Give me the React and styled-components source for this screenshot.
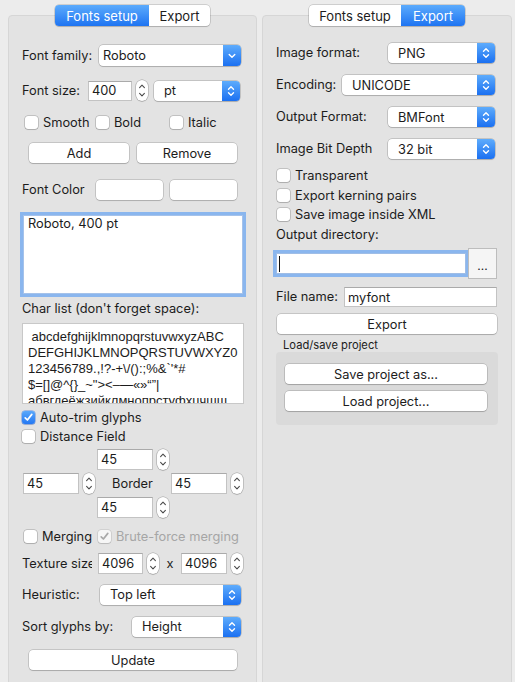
import React from "react";
import styled, { createGlobalStyle } from "styled-components";

const GlobalStyle = createGlobalStyle`
  html, body {
    margin: 0;
    padding: 0;
  }
  body {
    background: #ececec;
    font-family: Inter, "Liberation Sans", Arial, sans-serif;
    font-size: 12.8px;
    color: #1c1c1c;
  }
`;

const Window = styled.div`
  display: flex;
  align-items: flex-start;
  gap: 5px;
  height: 682px;
  padding: 5px 3px 0 8px;
  box-sizing: border-box;
  overflow: hidden;
  background: #ececec;
`;

const Column = styled.div`
  display: flex;
  flex-direction: column;
  width: ${(p) => p.$w}px;
  height: 700px;
  flex-shrink: 0;
`;

const TabBar = styled.div`
  align-self: center;
  position: relative;
  z-index: 1;
  display: flex;
  height: 21px;
  border-radius: 4px;
  background: #fff;
  box-shadow: 0 0 0 0.5px rgba(0, 0, 0, 0.25), 0 1px 1px rgba(0, 0, 0, 0.12);
  overflow: hidden;
`;

const Tab = styled.div`
  display: flex;
  align-items: center;
  width: ${(p) => p.$w}px;
  justify-content: center;
  font-size: 13px;
  color: ${(p) => (p.$active ? "#fff" : "#1c1c1c")};
  background: ${(p) =>
    p.$active ? "linear-gradient(#5cabfc, #1e74f2)" : "transparent"};
`;

const Panel = styled.div`
  flex: 1;
  margin-top: -11px;
  display: flex;
  flex-direction: column;
  padding: 0 12px 0 13px;
  background: #e3e3e3;
  border: 1px solid #d6d6d6;
  border-radius: 4px;
`;

const Row = styled.div`
  display: flex;
  align-items: center;
  height: ${(p) => p.$h}px;
  margin-top: ${(p) => p.$mt}px;
  margin-left: ${(p) => p.$ml || 0}px;
  gap: ${(p) => p.$gap || 0}px;
`;

const Label = styled.span`
  width: ${(p) => p.$w}px;
  margin-right: ${(p) => p.$mr || 0}px;
  flex-shrink: 0;
  white-space: nowrap;
  overflow: hidden;
  line-height: 16px;
  color: ${(p) => (p.$disabled ? "#a6a6a6" : "inherit")};
`;

const Caption = styled.div`
  margin: 4px 0 0 7px;
  height: 14px;
  line-height: 14px;
  font-size: 11.2px;
`;

const SelectBox = styled.div`
  display: flex;
  align-items: center;
  flex-shrink: 0;
  width: ${(p) => p.$w}px;
  height: ${(p) => p.$h || 20}px;
  margin-left: ${(p) => p.$ml || 0}px;
  background: #fff;
  border-radius: 4px;
  box-shadow: 0 0 0 0.5px rgba(0, 0, 0, 0.28), 0 1px 1px rgba(0, 0, 0, 0.12);
  overflow: hidden;
`;

const SelectText = styled.span`
  flex: 1;
  padding-left: ${(p) => p.$pad}px;
  white-space: nowrap;
`;

const ArrowBox = styled.span`
  width: 18px;
  align-self: stretch;
  display: flex;
  align-items: center;
  justify-content: center;
  background: linear-gradient(#5eacfc, #1b70f1);
`;

const Field = styled.input`
  width: ${(p) => p.$w}px;
  height: ${(p) => p.$h || 21}px;
  box-sizing: border-box;
  flex-shrink: 0;
  margin: 0;
  padding: 0 3px;
  border: 1px solid #c3c3c3;
  border-top-color: #aaaaaa;
  background: #fff;
  font: inherit;
  color: inherit;
  outline: none;
`;

const FocusField = styled.div`
  display: flex;
  align-items: center;
  width: ${(p) => p.$w}px;
  height: 21px;
  box-sizing: border-box;
  flex-shrink: 0;
  background: #fff;
  border: 1px solid #9fbde6;
  box-shadow: 0 0 0 3px #8ab6ee;
`;

const Caret = styled.span`
  width: 1px;
  height: 16px;
  margin-left: 2px;
  background: #111;
`;

const DotsButton = styled.div`
  width: 29px;
  height: 31px;
  margin-left: 2px;
  box-sizing: border-box;
  display: flex;
  align-items: center;
  justify-content: center;
  padding-top: 3px;
  border: 1px solid #bdbdbd;
  background: #f5f5f5;
  font-size: 12px;
`;

const StepperBox = styled.span`
  display: flex;
  flex-shrink: 0;
  width: 12px;
  height: 21px;
  border-radius: 6px;
  background: #fff;
  box-shadow: 0 0 0 0.5px rgba(0, 0, 0, 0.3), 0 1px 1px rgba(0, 0, 0, 0.1);
`;

const Button = styled.button`
  width: ${(p) => p.$w}px;
  height: 20px;
  flex-shrink: 0;
  margin: 0;
  padding: 0;
  border: none;
  border-radius: 4px;
  background: #fff;
  box-shadow: 0 0 0 0.5px rgba(0, 0, 0, 0.26), 0 1px 1px rgba(0, 0, 0, 0.14);
  font: inherit;
  color: inherit;
`;

const Swatch = styled.div`
  width: ${(p) => p.$w}px;
  height: 20px;
  border-radius: 4px;
  background: #fff;
  box-shadow: 0 0 0 0.5px rgba(0, 0, 0, 0.26), 0 1px 1px rgba(0, 0, 0, 0.12);
`;

const PreviewList = styled.div`
  width: 220px;
  height: 79px;
  margin: 15px 0 0 1px;
  box-sizing: border-box;
  padding: 0 4px;
  line-height: 16px;
  background: #fff;
  border: 1px solid #a5c2ea;
  box-shadow: 0 0 0 3px #8ab6ee;
`;

const CharBox = styled.div`
  width: 222px;
  height: 81px;
  margin-top: 6px;
  box-sizing: border-box;
  padding: 5px 5px 0;
  background: #fff;
  border: 1px solid #c8c8c8;
  font-family: "Liberation Sans", Arial, sans-serif;
  font-size: 13px;
  line-height: 16px;
  white-space: pre;
  overflow: hidden;
`;

const CheckItem = styled.label`
  display: flex;
  align-items: center;
  gap: 5px;
  width: ${(p) => (p.$w ? `${p.$w}px` : "auto")};
  flex-shrink: 0;
`;

const Box = styled.span`
  display: flex;
  align-items: center;
  justify-content: center;
  width: 13px;
  height: 13px;
  border-radius: 3px;
  background: ${(p) =>
    p.$checked ? "linear-gradient(#5aa8fb, #2478f3)" : p.$disabled ? "#f6f6f6" : "#fff"};
  box-shadow: 0 0 0 0.5px
      ${(p) => (p.$checked ? "rgba(20, 90, 220, 0.6)" : p.$disabled ? "rgba(0,0,0,0.16)" : "rgba(0,0,0,0.3)")},
    0 1px 1px rgba(0, 0, 0, 0.1);
`;

const BorderGrid = styled.div`
  display: grid;
  grid-template-columns: repeat(3, 71px);
  grid-template-rows: repeat(3, 21px);
  gap: 3px;
  margin: 6px 0 0 1px;
`;

const SpinCell = styled.div`
  display: flex;
  align-items: center;
  gap: 4px;
  grid-column: ${(p) => p.$col};
  grid-row: ${(p) => p.$row};
`;

const GridText = styled.div`
  grid-column: 2;
  grid-row: 2;
  display: flex;
  align-items: center;
  justify-content: center;
`;

const TimesSign = styled.span`
  width: 14px;
  text-align: center;
  flex-shrink: 0;
`;

const GroupBox = styled.div`
  width: 222px;
  box-sizing: border-box;
  display: flex;
  flex-direction: column;
  gap: 7px;
  padding: 12px 9px 14px;
  background: #dadada;
  border-radius: 4px;
`;

const UpDown = ({ color = "#fff" }) => (
  <svg width="8" height="12" viewBox="0 0 8 12" fill="none" stroke={color} strokeWidth="1.4" strokeLinecap="round" strokeLinejoin="round">
    <path d="M1.5 4.3 L4 1.8 L6.5 4.3" />
    <path d="M1.5 7.7 L4 10.2 L6.5 7.7" />
  </svg>
);

const Down = () => (
  <svg width="8" height="6" viewBox="0 0 8 6" fill="none" stroke="#fff" strokeWidth="1.4" strokeLinecap="round" strokeLinejoin="round">
    <path d="M1.2 1.5 L4 4.3 L6.8 1.5" />
  </svg>
);

const Check = ({ color = "#fff" }) => (
  <svg width="11" height="11" viewBox="0 0 11 11" fill="none" stroke={color} strokeWidth="1.7" strokeLinecap="round" strokeLinejoin="round">
    <path d="M2.2 5.8 L4.4 8 L8.8 2.4" />
  </svg>
);

const Stepper = () => (
  <StepperBox>
    <svg width="12" height="21" viewBox="0 0 12 21" fill="none" stroke="#4a4a4a" strokeWidth="1.1" strokeLinecap="round" strokeLinejoin="round">
      <path d="M3.6 7.6 L6 5.2 L8.4 7.6" />
      <path d="M3.6 13.4 L6 15.8 L8.4 13.4" />
    </svg>
  </StepperBox>
);

const Select = ({ w, h, ml, value, combo }) => (
  <SelectBox $w={w} $h={h} $ml={ml}>
    <SelectText $pad={combo ? 4 : 10}>{value}</SelectText>
    <ArrowBox>{combo ? <Down /> : <UpDown />}</ArrowBox>
  </SelectBox>
);

const Checkbox = ({ label, w, checked, disabled }) => (
  <CheckItem $w={w}>
    <Box $checked={checked} $disabled={disabled}>
      {checked && <Check />}
      {disabled && <Check color="#a9a9a9" />}
    </Box>
    <Label $disabled={disabled}>{label}</Label>
  </CheckItem>
);

const Spin = ({ value, col, row, w = 56 }) => (
  <SpinCell $col={col} $row={row}>
    <Field $w={w} defaultValue={value} />
    <Stepper />
  </SpinCell>
);

const charLines = [
  " abcdefghijklmnopqrstuvwxyzABC",
  "DEFGHIJKLMNOPQRSTUVWXYZ0",
  "123456789.,!?-+\\/():;%&`'*#",
  "$=[]@^{}_~\"><–—«»“”|",
  "абвгдеёжзийклмнопрстуфхцчшщ",
];

const Tabs = ({ active, widths }) => (
  <TabBar>
    <Tab $w={widths[0]} $active={active === "fonts"}>Fonts setup</Tab>
    <Tab $w={widths[1]} $active={active === "export"}>Export</Tab>
  </TabBar>
);

const FontsSetup = () => (
  <Column $w={249}>
    <Tabs active="fonts" widths={[94, 61]} />
    <Panel>
      <Row $mt={29} $h={21}>
        <Label $w={77}>Font family:</Label>
        <Select w={142} h={21} value="Roboto" combo />
      </Row>
      <Row $mt={14} $h={21} $gap={4}>
        <Label $w={62}>Font size:</Label>
        <Field $w={44} $h={20} defaultValue="400" />
        <Stepper />
        <Select w={86} ml={2} value="pt" />
      </Row>
      <Row $mt={14} $h={15} $ml={3}>
        <Checkbox w={71} label="Smooth" />
        <Checkbox w={74} label="Bold" />
        <Checkbox label="Italic" />
      </Row>
      <Row $mt={13} $h={20} $ml={7} $gap={8}>
        <Button $w={100}>Add</Button>
        <Button $w={100}>Remove</Button>
      </Row>
      <Row $mt={17} $h={20} $gap={7}>
        <Label $w={67}>Font Color</Label>
        <Swatch $w={67} />
        <Swatch $w={67} />
      </Row>
      <PreviewList>Roboto, 400 pt</PreviewList>
      <Row $mt={7} $h={16}>
        <Label>Char list (don't forget space):</Label>
      </Row>
      <CharBox>
        {charLines.map((line) => (
          <div key={line}>{line}</div>
        ))}
      </CharBox>
      <Row $mt={7} $h={13}>
        <Checkbox label="Auto-trim glyphs" checked />
      </Row>
      <Row $mt={6} $h={13}>
        <Checkbox label="Distance Field" />
      </Row>
      <BorderGrid>
        <Spin value="45" col={2} row={1} />
        <Spin value="45" col={1} row={2} />
        <GridText>Border</GridText>
        <Spin value="45" col={3} row={2} />
        <Spin value="45" col={2} row={3} />
      </BorderGrid>
      <Row $mt={12} $h={13} $ml={2}>
        <Checkbox w={74} label="Merging" />
        <Checkbox label="Brute-force merging" disabled />
      </Row>
      <Row $mt={10} $h={21} $gap={4}>
        <Label $w={70} $mr={2}>Texture size</Label>
        <Field $w={45} defaultValue="4096" />
        <Stepper />
        <TimesSign>x</TimesSign>
        <Field $w={46} defaultValue="4096" />
        <Stepper />
      </Row>
      <Row $mt={10} $h={21}>
        <Label $w={78}>Heuristic:</Label>
        <Select w={141} value="Top left" />
      </Row>
      <Row $mt={11} $h={21}>
        <Label $w={110}>Sort glyphs by:</Label>
        <Select w={109} value="Height" />
      </Row>
      <Row $mt={13} $h={20} $ml={7}>
        <Button $w={208}>Update</Button>
      </Row>
    </Panel>
  </Column>
);

const ExportSetup = () => (
  <Column $w={250}>
    <Tabs active="export" widths={[92, 64]} />
    <Panel>
      <Row $mt={27} $h={20}>
        <Label $w={112}>Image format:</Label>
        <Select w={107} value="PNG" />
      </Row>
      <Row $mt={12} $h={20}>
        <Label $w={66}>Encoding:</Label>
        <Select w={153} value="UNICODE" />
      </Row>
      <Row $mt={12} $h={20}>
        <Label $w={112}>Output Format:</Label>
        <Select w={107} value="BMFont" />
      </Row>
      <Row $mt={12} $h={20}>
        <Label $w={112}>Image Bit Depth</Label>
        <Select w={107} value="32 bit" />
      </Row>
      <Row $mt={10} $h={13} $ml={1}>
        <Checkbox label="Transparent" />
      </Row>
      <Row $mt={7} $h={13} $ml={1}>
        <Checkbox label="Export kerning pairs" />
      </Row>
      <Row $mt={6} $h={13} $ml={1}>
        <Checkbox label="Save image inside XML" />
      </Row>
      <Row $mt={6} $h={16}>
        <Label>Output directory:</Label>
      </Row>
      <Row $mt={5} $h={31}>
        <FocusField $w={190}>
          <Caret />
        </FocusField>
        <DotsButton>...</DotsButton>
      </Row>
      <Row $mt={8} $h={20}>
        <Label $w={68}>File name:</Label>
        <Field $w={153} $h={20} defaultValue="myfont" />
      </Row>
      <Row $mt={7} $h={20} $ml={1}>
        <Button $w={220}>Export</Button>
      </Row>
      <Caption>Load/save project</Caption>
      <GroupBox>
        <Button $w={202}>Save project as...</Button>
        <Button $w={202}>Load project...</Button>
      </GroupBox>
    </Panel>
  </Column>
);

export default function App() {
  return (
    <>
      <GlobalStyle />
      <Window>
        <FontsSetup />
        <ExportSetup />
      </Window>
    </>
  );
}
